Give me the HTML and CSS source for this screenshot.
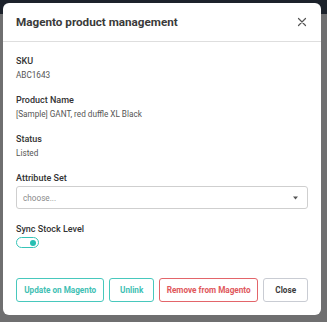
FILE: index.html
```
<!DOCTYPE html>
<html>
<head>
<meta charset="utf-8">
<link rel="stylesheet" href="styles.css">
</head>
<body>
<div class="page">
  <div class="topbar"></div>
  <div class="backdrop"></div>
</div>
<div class="modal">
  <div class="modal-header">
    <h1 class="title">Magento product management</h1>
    <svg class="close-x" width="10" height="10" viewBox="0 0 10 10"><path d="M1.5 1.5L8.5 8.5M8.5 1.5L1.5 8.5" stroke="#555" stroke-width="1.2" fill="none" stroke-linecap="round"/></svg>
  </div>
  <div class="modal-body">
    <div class="field">
      <div class="label">SKU</div>
      <div class="value">ABC1643</div>
    </div>
    <div class="field">
      <div class="label">Product Name</div>
      <div class="value">[Sample] GANT, red duffle XL Black</div>
    </div>
    <div class="field">
      <div class="label">Status</div>
      <div class="value">Listed</div>
    </div>
    <div class="field field-select">
      <div class="label">Attribute Set</div>
      <div class="select">
        <span class="placeholder">choose...</span>
        <svg class="caret" width="5" height="4" viewBox="0 0 5 4"><path d="M0 0.5H5L2.5 3.5Z" fill="#555"/></svg>
      </div>
    </div>
    <div class="field field-toggle">
      <div class="label">Sync Stock Level</div>
      <div class="toggle"><span class="knob"></span></div>
    </div>
    <div class="actions">
      <button class="btn btn-teal btn-update">Update on Magento</button>
      <button class="btn btn-teal btn-unlink">Unlink</button>
      <button class="btn btn-red btn-remove">Remove from Magento</button>
      <button class="btn btn-grey btn-close">Close</button>
    </div>
  </div>
</div>
</body>
</html>
```
FILE: styles.css
```
* { box-sizing: border-box; }
html, body { margin: 0; padding: 0; }
body {
  width: 327px;
  height: 322px;
  overflow: hidden;
  font-family: Roboto, "Noto Sans", sans-serif;
  background: #6f6f70;
  position: relative;
}
.page { display: flex; flex-direction: column; height: 322px; }
.topbar { height: 14px; background: #1c222b; }
.backdrop { flex: 1; background: #6f6f70; }
.modal {
  position: absolute;
  left: 3px;
  top: 3px;
  width: 318px;
  height: 312px;
  background: #fff;
  border-radius: 6px;
  display: flex;
  flex-direction: column;
}
.modal-header {
  height: 39px;
  border-bottom: 1px solid #dedede;
  display: flex;
  align-items: center;
  justify-content: space-between;
  padding: 0 13px 0 13px;
}
.title {
  margin: 0;
  font-size: 11.7px;
  font-weight: 700;
  color: #3a3a3a;
}
.close-x { margin-right: 1px; }
.modal-body {
  padding: 12px 13px 13px 13px;
  display: flex;
  flex-direction: column;
  flex: 1;
}
.field { margin-bottom: 11px; }
.label {
  font-size: 9px;
  line-height: 14px;
  font-weight: 500;
  color: #333;
  margin-bottom: 1px;
}
.value {
  font-size: 8.2px;
  line-height: 13px;
  color: #555;
}
.field-select { margin-bottom: 13px; }
.select {
  height: 23px;
  border: 1px solid #cfcfcf;
  border-radius: 3px;
  display: flex;
  align-items: center;
  justify-content: space-between;
  padding: 0 9px 0 6px;
}
.placeholder { font-size: 8.2px; color: #8a8a8a; }
.field-toggle { margin-bottom: 0; }
.toggle {
  width: 23px;
  height: 11px;
  border: 1.5px solid #37c4b8;
  border-radius: 6px;
  display: flex;
  align-items: center;
  justify-content: flex-end;
  padding-right: 2px;
}
.knob {
  width: 6px;
  height: 6px;
  border-radius: 50%;
  background: #26bfb2;
}
.actions {
  margin-top: auto;
  display: flex;
  gap: 5px;
}
.btn {
  height: 24px;
  background: #fff;
  border-radius: 3px;
  font-family: inherit;
  font-size: 8.2px;
  font-weight: 700;
  padding: 0;
  display: flex;
  align-items: center;
  justify-content: center;
}
.btn-teal { border: 1px solid #48c8bd; color: #3fbfb4; }
.btn-red { border: 1px solid #e3656a; color: #e0575c; }
.btn-grey { border: 1px solid #c9ccd3; color: #3a3a3a; }
.btn-update { width: 89px; }
.btn-unlink { width: 45px; }
.btn-remove { width: 100px; }
.btn-close { width: 45px; }
```
